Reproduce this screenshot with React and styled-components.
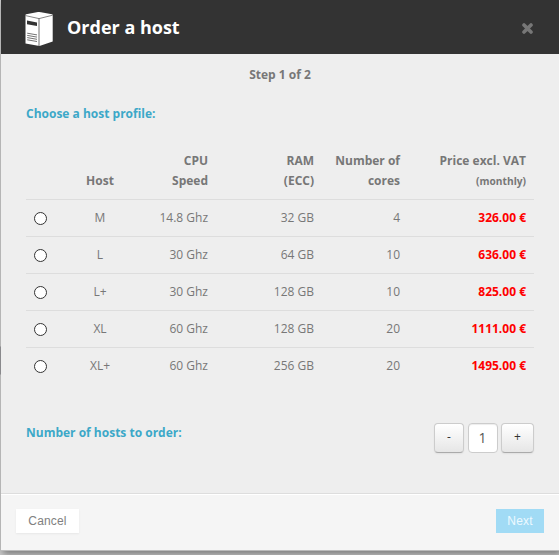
import React, { useState } from "react";
import styled, { createGlobalStyle } from "styled-components";

const GlobalStyle = createGlobalStyle`
  *, *::before, *::after { box-sizing: border-box; }
  body {
    margin: 0;
    background: #c4c4c4;
    font-family: "Open Sans", "Noto Sans", sans-serif;
    font-size: 12px;
    line-height: 20px;
    color: #777;
    overflow: hidden;
  }
`;

const Page = styled.div`
  height: 555px;
  background: linear-gradient(to bottom, #c9c9c9 346px, #98989c 347px, #98989c 374px, #c9c9c9 375px);
`;

const Backdrop = styled.div`
  height: 555px;
  padding-left: 1px;
  overflow: hidden;
`;

const Dialog = styled.div`
  width: 558px;
  height: 551px;
  display: flex;
  flex-direction: column;
  background: #eee;
  border-bottom: 1px solid #bbb;
  box-shadow: 2px 3px 7px rgba(0, 0, 0, 0.4);
`;

const Header = styled.header`
  flex: none;
  height: 54px;
  padding: 0 26px 0 24px;
  display: flex;
  align-items: center;
  background: #333;
`;

const ServerIcon = styled.svg`
  width: 28px;
  height: 36px;
  margin-top: 2px;
`;

const Title = styled.h1`
  flex: 1;
  margin: 0 0 0 14px;
  font-size: 18px;
  line-height: 24px;
  font-weight: 700;
  color: #fff;
`;

const CloseButton = styled.button`
  width: 11px;
  height: 11px;
  margin-top: 2px;
  padding: 0;
  border: 0;
  background: none;
  display: flex;
`;

const Body = styled.main`
  flex: 1;
  padding: 11px 25px 0;
`;

const Step = styled.p`
  margin: 0;
  text-align: center;
  font-weight: 700;
`;

const SectionLabel = styled.h2`
  margin: 0;
  font-size: 12px;
  line-height: 20px;
  font-weight: 700;
  color: #3ca8c8;
`;

const ProfileLabel = styled(SectionLabel)`
  margin-top: 19px;
`;

const ProfileTable = styled.table`
  width: 508px;
  margin-top: 19px;
  table-layout: fixed;
  border-collapse: separate;
  border-spacing: 0;
`;

const Column = styled.col`
  width: ${(p) => p.$width}px;
`;

const HeadCell = styled.th`
  padding: 8px;
  vertical-align: bottom;
  white-space: pre-line;
  text-align: ${(p) => p.$align || "right"};
  font-weight: 700;
`;

const Small = styled.small`
  font-size: 10.2px;
`;

const Cell = styled.td`
  height: 37px;
  padding: 8px;
  border-top: 1px solid #ddd;
  text-align: ${(p) => p.$align || "right"};
`;

const PriceCell = styled(Cell)`
  font-weight: 700;
  color: #f00;
`;

const Radio = styled.input`
  display: block;
  appearance: none;
  width: 13px;
  height: 13px;
  margin: 1px 0 0;
  border: 1px solid #333;
  border-radius: 50%;
  background: #fff;
  &:checked { box-shadow: inset 0 0 0 3px #fff; background: #333; }
`;

const QuantityRow = styled.div`
  display: flex;
  justify-content: space-between;
  margin-top: 39px;
`;

const Stepper = styled.div`
  display: flex;
  justify-content: space-between;
  width: 100px;
`;

const StepButton = styled.button`
  width: ${(p) => p.$width}px;
  height: 30px;
  padding: 0 0 2px;
  border: 1px solid #ccc;
  border-bottom-color: #aaa;
  border-radius: 4px;
  background: linear-gradient(#fff, #e6e6e6);
  box-shadow: 0 1px 2px rgba(0, 0, 0, 0.06);
  font: 12px/20px "Open Sans", sans-serif;
  color: #333;
`;

const QuantityInput = styled.input`
  width: 30px;
  height: 30px;
  padding: 0 0 1px;
  border: 1px solid #ccc;
  border-radius: 4px;
  background: #fff;
  box-shadow: inset 0 1px 1px rgba(0, 0, 0, 0.075);
  text-align: center;
  font: 14px/20px "Open Sans", sans-serif;
  color: #555;
`;

const Footer = styled.footer`
  flex: none;
  height: 57px;
  padding: 14px 15px 0;
  display: flex;
  justify-content: space-between;
  align-items: flex-start;
  background: #f5f5f5;
  border-top: 1px solid #ddd;
  box-shadow: inset 0 1px 0 #fff;
`;

const FooterButton = styled.button`
  width: ${(p) => p.$width}px;
  height: 24px;
  margin-top: 1px;
  padding: 0;
  border: 0;
  background: ${(p) => (p.$primary ? "#a1dbf5" : "#fff")};
  color: ${(p) => (p.$primary ? "#edf9ff" : "#808080")};
  box-shadow: ${(p) => (p.$primary ? "none" : "0 1px 2px rgba(0, 0, 0, 0.06)")};
  font: 12px/24px "Liberation Sans", Arial, sans-serif;
  letter-spacing: 0.15px;
`;

const profiles = [
  { host: "M", cpu: "14.8 Ghz", ram: "32 GB", cores: 4, price: "326.00 €" },
  { host: "L", cpu: "30 Ghz", ram: "64 GB", cores: 10, price: "636.00 €" },
  { host: "L+", cpu: "30 Ghz", ram: "128 GB", cores: 10, price: "825.00 €" },
  { host: "XL", cpu: "60 Ghz", ram: "128 GB", cores: 20, price: "1111.00 €" },
  { host: "XL+", cpu: "60 Ghz", ram: "256 GB", cores: 20, price: "1495.00 €" },
];

const columnWidths = [36, 76, 78, 106, 86, 126];

export default function App() {
  const [quantity, setQuantity] = useState(1);
  const [selected, setSelected] = useState(null);

  return (
    <Page>
      <GlobalStyle />
      <Backdrop>
        <Dialog role="dialog" aria-label="Order a host">
          <Header>
            <ServerIcon viewBox="0 0 28 36" aria-hidden="true">
              <path d="M0.5 5 Q0.5 4.4 1.2 4.2L13 2.1Q14.5 1.9 16 2.2L27 4.2Q27.7 4.4 27.7 5V31.6L14.5 36 0.5 33.4Z" fill="#fff" />
              <path d="M0.5 5.6 14 8.6 27.7 5.2" fill="none" stroke="#444" strokeWidth="0.65" />
              <path d="M14 8.6V36" fill="none" stroke="#444" strokeWidth="0.75" />
              <path d="M2 10.6 12 12.4V16L2 14.2Z" fill="#333" />
              <path d="M2.2 23.2 12 24.9M2.2 25.4 12 27.1M2.2 27.6 12 29.3M2.2 29.8 12 31.5" stroke="#444" strokeWidth="0.75" />
            </ServerIcon>
            <Title>Order a host</Title>
            <CloseButton aria-label="Close">
              <svg width="11" height="11" viewBox="0 0 11 11">
                <path d="M2 2 9 9M9 2 2 9" stroke="#777" strokeWidth="3.6" strokeLinecap="round" />
              </svg>
            </CloseButton>
          </Header>

          <Body>
            <Step>Step 1 of 2</Step>
            <ProfileLabel>Choose a host profile:</ProfileLabel>
            <ProfileTable>
              <colgroup>
                {columnWidths.map((w, i) => <Column key={i} $width={w} />)}
              </colgroup>
              <thead>
                <tr>
                  <HeadCell />
                  <HeadCell $align="center">Host</HeadCell>
                  <HeadCell>{"CPU\nSpeed"}</HeadCell>
                  <HeadCell>{"RAM\n(ECC)"}</HeadCell>
                  <HeadCell>{"Number of\ncores"}</HeadCell>
                  <HeadCell>{"Price excl. VAT\n"}<Small>(monthly)</Small></HeadCell>
                </tr>
              </thead>
              <tbody>
                {profiles.map((p) => (
                  <tr key={p.host}>
                    <Cell $align="left">
                      <Radio
                        type="radio"
                        name="profile"
                        aria-label={p.host}
                        checked={selected === p.host}
                        onChange={() => setSelected(p.host)}
                      />
                    </Cell>
                    <Cell $align="center">{p.host}</Cell>
                    <Cell>{p.cpu}</Cell>
                    <Cell>{p.ram}</Cell>
                    <Cell>{p.cores}</Cell>
                    <PriceCell>{p.price}</PriceCell>
                  </tr>
                ))}
              </tbody>
            </ProfileTable>
            <QuantityRow>
              <SectionLabel>Number of hosts to order:</SectionLabel>
              <Stepper>
                <StepButton $width={30} onClick={() => setQuantity(Math.max(1, quantity - 1))}>-</StepButton>
                <QuantityInput value={quantity} readOnly aria-label="Number of hosts" />
                <StepButton $width={33} onClick={() => setQuantity(quantity + 1)}>+</StepButton>
              </Stepper>
            </QuantityRow>
          </Body>

          <Footer>
            <FooterButton $width={63}>Cancel</FooterButton>
            <FooterButton $width={48} $primary>Next</FooterButton>
          </Footer>
        </Dialog>
      </Backdrop>
    </Page>
  );
}
